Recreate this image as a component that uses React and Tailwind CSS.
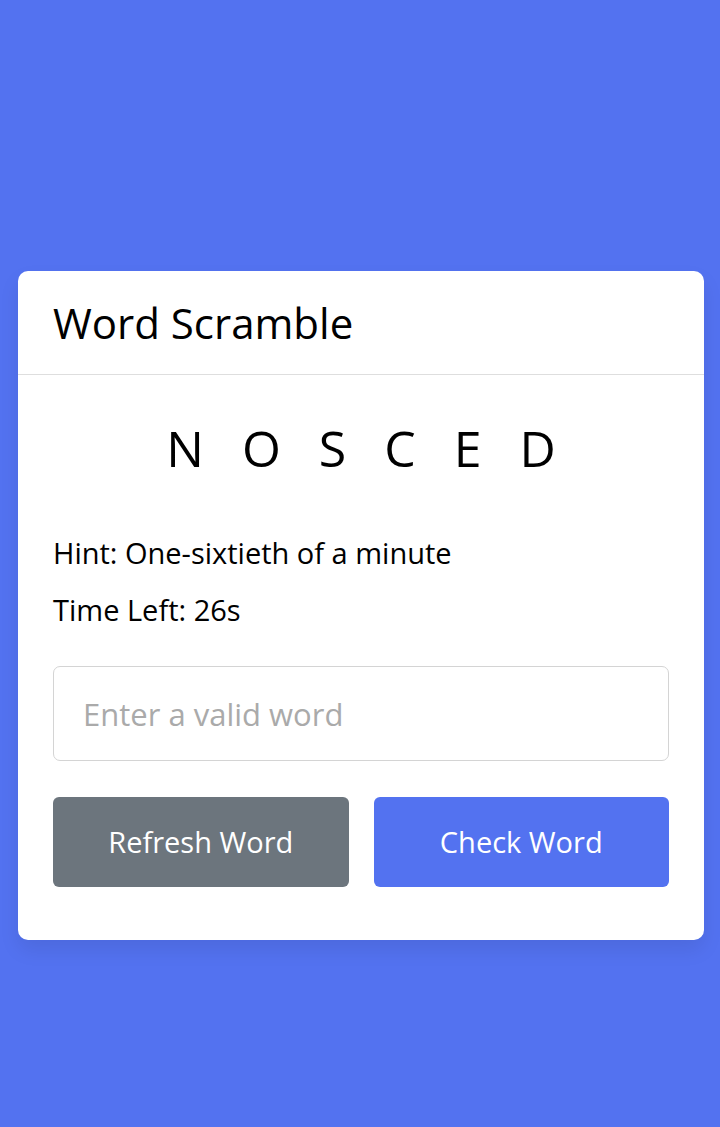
export default function App() {
  return (
    <div
      className="min-h-[1127px] w-full bg-[#5372F0] flex items-center"
      style={{ fontFamily: '"Open Sans", "Noto Sans", sans-serif' }}
    >
      <div className="ml-[18px] w-[686px] bg-white rounded-[10px] shadow-[0_10px_20px_rgba(0,0,0,0.08)] mt-[84px]">
        <div className="h-[104px] px-[35px] flex items-center border-b border-[#dedede]">
          <h1 className="text-[42px] font-medium text-black leading-none">Word Scramble</h1>
        </div>
        <div className="px-[35px] pt-[48px] pb-[53px]">
          <p className="text-center text-[50px] font-medium text-black leading-none tracking-[38px] pl-[38px]">
            NOSCED
          </p>
          <div className="mt-[66px] text-[29px] text-black leading-[27px]">
            <p>Hint: One-sixtieth of a minute</p>
            <p className="mt-[30px]">
              Time Left: <span className="font-medium">26s</span>
            </p>
          </div>
          <input
            type="text"
            placeholder="Enter a valid word"
            className="mt-[43px] w-full h-[95px] border border-[#d4d4d4] rounded-[7px] px-[29px] text-[31px] text-black placeholder:text-[#aaaaaa] outline-none"
          />
          <div className="mt-[36px] grid grid-cols-2 gap-[25px]">
            <button className="h-[90px] rounded-[6px] bg-[#6c757d] text-white text-[29px]">
              Refresh Word
            </button>
            <button className="h-[90px] rounded-[6px] bg-[#5372F0] text-white text-[29px]">
              Check Word
            </button>
          </div>
        </div>
      </div>
    </div>
  );
}
